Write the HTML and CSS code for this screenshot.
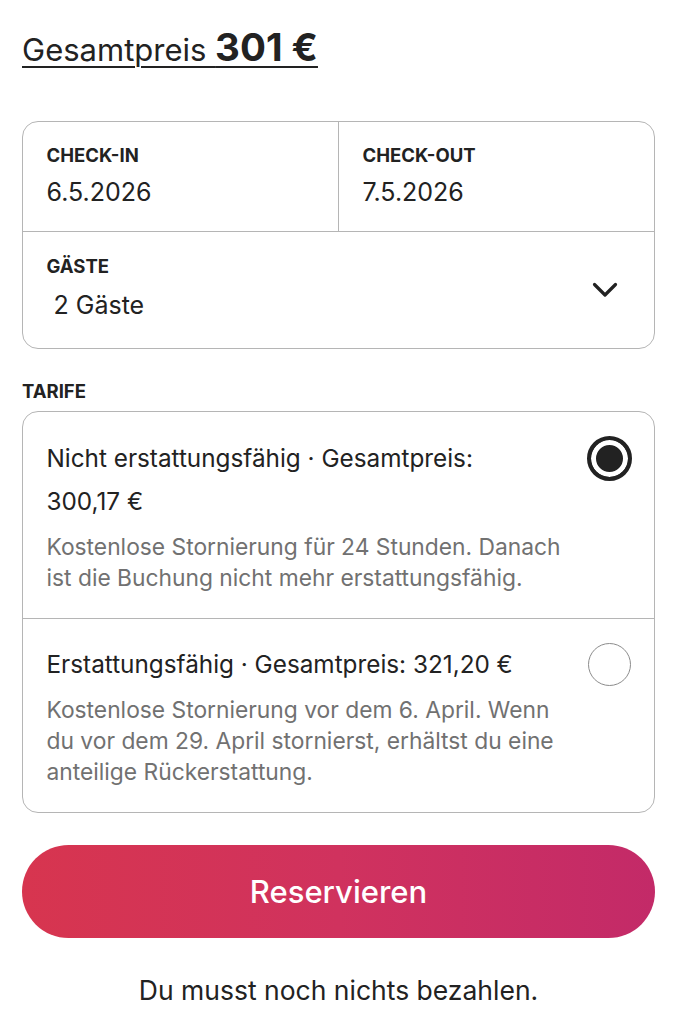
FILE: index.html
```html
<!DOCTYPE html>
<html lang="de">
<head>
    <meta charset="UTF-8">
    <title>Reservieren</title>
    <link rel="stylesheet" href="styles.css">
</head>
<body>
<div class="page">
    <h2 class="total">Gesamtpreis <b>301&nbsp;€</b></h2>

    <div class="booking">
        <div class="dates">
            <div class="field">
                <span class="label">CHECK-IN</span>
                <span class="value">6.5.2026</span>
            </div>
            <div class="field field-right">
                <span class="label">CHECK-OUT</span>
                <span class="value">7.5.2026</span>
            </div>
        </div>
        <div class="guests">
            <div class="field">
                <span class="label">GÄSTE</span>
                <span class="value guest-value">2 Gäste</span>
            </div>
            <svg class="chevron" width="28" height="28" viewBox="0 0 28 28">
                <path d="M3.5 8.5 L14 19 L24.5 8.5" fill="none" stroke="#222" stroke-width="3.2" stroke-linecap="round" stroke-linejoin="round"/>
            </svg>
        </div>
    </div>

    <h5 class="section-title">TARIFE</h5>
    <div class="rates">
        <div class="rate">
            <div class="rate-text">
                <p class="rate-title">Nicht erstattungsfähig · Gesamtpreis: 300,17&nbsp;€</p>
                <p class="rate-desc">Kostenlose Stornierung für 24 Stunden. Danach ist die Buchung nicht mehr erstattungsfähig.</p>
            </div>
            <span class="radio checked"></span>
        </div>
        <div class="rate">
            <div class="rate-text">
                <p class="rate-title">Erstattungsfähig · Gesamtpreis: 321,20&nbsp;€</p>
                <p class="rate-desc">Kostenlose Stornierung vor dem 6. April. Wenn du vor dem 29. April stornierst, erhältst du eine anteilige Rückerstattung.</p>
            </div>
            <span class="radio"></span>
        </div>
    </div>

    <button class="reserve">Reservieren</button>
    <p class="note">Du musst noch nichts bezahlen.</p>
</div>
</body>
</html>
```

FILE: styles.css
```css
*{
    margin:0;
    padding:0;
    box-sizing:border-box;
}
body{
    font-family:Inter, "Noto Sans", sans-serif;
    color:#222;
    background:#fff;
}
.page{
    padding:23px 29px 0 22px;
}
.total{
    font-size:31px;
    font-weight:400;
    line-height:48px;
    text-decoration:underline;
    text-underline-offset:5px;
    text-decoration-thickness:2px;
}
.total b{
    font-size:38.5px;
    font-weight:700;
}
.booking{
    margin-top:47px;
    border:1.5px solid #b5b5b5;
    border-radius:16px;
    overflow:hidden;
}
.dates{
    display:flex;
    height:110px;
    border-bottom:1.5px solid #b5b5b5;
}
.field{
    flex:1;
    padding:22px 0 0 23.5px;
    display:flex;
    flex-direction:column;
    align-items:flex-start;
}
.field-right{
    border-left:1.5px solid #b5b5b5;
}
.label{
    font-size:18.5px;
    font-weight:700;
    line-height:22px;
}
.value{
    font-size:25px;
    line-height:30px;
    margin-top:10.5px;
}
.guests{
    display:flex;
    align-items:flex-start;
    height:116px;
}
.guests .field{
    padding-top:23px;
}
.guest-value{
    margin-top:12.5px;
    padding-left:7px;
}
.chevron{
    flex:none;
    margin:44px 35.5px 0 0;
}
.section-title{
    font-size:18.5px;
    font-weight:700;
    line-height:22px;
    margin-top:31px;
}
.rates{
    margin-top:9px;
    border:1.5px solid #b5b5b5;
    border-radius:16px;
}
.rate{
    display:flex;
    justify-content:space-between;
    align-items:flex-start;
    padding:24.5px 23.5px 25px 23.5px;
}
.rate + .rate{
    border-top:1.5px solid #b5b5b5;
}
.rate-text{
    width:528px;
}
.rate-title{
    font-size:24.3px;
    line-height:43px;
}
.rate-desc{
    font-size:22.8px;
    line-height:31px;
    color:#717171;
    margin-top:8px;
}
.radio{
    flex:none;
    width:43px;
    height:43px;
    border-radius:50%;
    border:1.5px solid #8c8c8c;
}
.radio.checked{
    width:45px;
    height:45px;
    margin-top:-1px;
    margin-right:-1px;
    border:4px solid #222;
    background:#222;
    box-shadow:inset 0 0 0 5px #fff;
}
.reserve{
    display:block;
    width:100%;
    height:93px;
    margin-top:32px;
    border:none;
    border-radius:47px;
    background:linear-gradient(to right, #d7354f, #d0325e 50%, #c32a68);
    color:#fff;
    font-family:inherit;
    font-size:31px;
    font-weight:500;
}
.note{
    text-align:center;
    font-size:26.5px;
    line-height:32px;
    margin-top:36px;
}
```
